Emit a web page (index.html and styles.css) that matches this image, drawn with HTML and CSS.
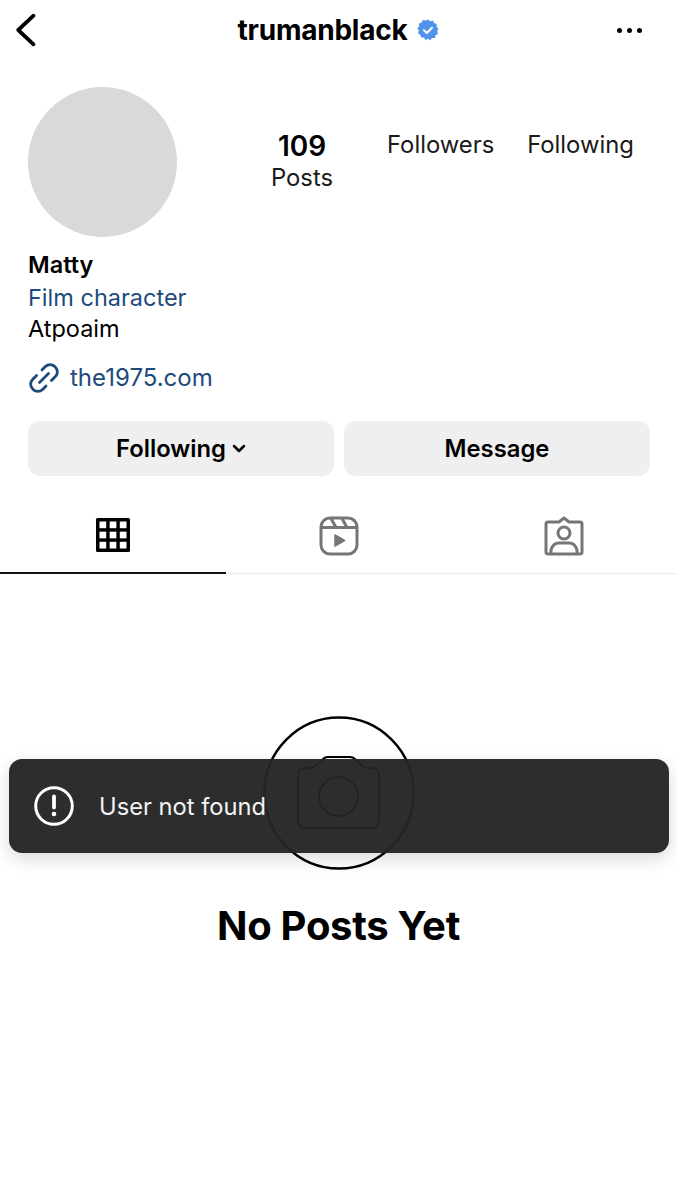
FILE: index.html
```html
<!DOCTYPE html>
<html lang="en">

<head>
    <meta charset="UTF-8">
    <meta name="viewport" content="width=device-width, initial-scale=1.0">
    <title>trumanblack</title>
    <link rel="stylesheet" href="styles.css">
</head>

<body>
    <!-- Top bar -->
    <header class="topbar">
        <svg class="back-icon" width="24" height="36" viewBox="0 0 24 36">
            <path d="M18.500 3.700 L3.200 18 L18.500 32.300" fill="none" stroke="#000" stroke-width="3.800" stroke-linecap="round" stroke-linejoin="round" />
        </svg>
        <div class="username">
            <span>trumanblack</span>
            <svg width="22" height="22" viewBox="0 0 22 22">
                <path fill="#4f94ea" d="M11 0.5l2.2 1.7 2.7-.6 1.2 2.5 2.6.9-.1 2.8 1.9 2-1.4 2.4.8 2.7-2.4 1.4-.6 2.7-2.8.1-1.8 2.1-2.3-1.5-2.5 1.2-1.6-2.3-2.8-.2-.6-2.7-2.4-1.3.7-2.7-1.5-2.4 1.9-2-.2-2.8 2.6-1 1.1-2.5 2.7.5z" />
                <path d="M7 11.3l2.8 2.7 5.2-5.2" fill="none" stroke="#fff" stroke-width="2" stroke-linecap="round" stroke-linejoin="round" />
            </svg>
        </div>
        <div class="more-icon"><i></i><i></i><i></i></div>
    </header>

    <!-- Avatar and counts -->
    <section class="profile-row">
        <div class="avatar"></div>
        <div class="stats">
            <div class="stat stat-posts">
                <strong>109</strong>
                <span>Posts</span>
            </div>
            <div class="stat"><span>Followers</span></div>
            <div class="stat"><span>Following</span></div>
        </div>
    </section>

    <!-- Bio -->
    <section class="bio">
        <div class="bio-name">Matty</div>
        <div class="bio-category">Film character</div>
        <div class="bio-text">Atpoaim</div>
        <div class="bio-link">
            <svg width="32" height="32" viewBox="0 0 32 32" fill="none" stroke="#1d4a7c" stroke-width="2.800" stroke-linecap="round">
                <path d="M14 8l3.400-3.400a6.600 6.600 0 0 1 9.400 0l.6.6a6.600 6.600 0 0 1 0 9.400l-4 4" />
                <path d="M18 24l-3.400 3.400a6.600 6.600 0 0 1-9.400 0l-.6-.6a6.600 6.600 0 0 1 0-9.400l4-4" />
                <path d="M11.500 20.500l9-9" />
            </svg>
            <span>the1975.com</span>
        </div>
    </section>

    <!-- Action buttons -->
    <section class="actions">
        <button class="action-btn" type="button">
            Following
            <svg width="14" height="9" viewBox="0 0 14 9">
                <path d="M2 2L7 7l5-5" fill="none" stroke="#000" stroke-width="2.500" stroke-linecap="round" stroke-linejoin="round" />
            </svg>
        </button>
        <button class="action-btn" type="button">Message</button>
    </section>

    <!-- Tabs -->
    <nav class="tabs">
        <div class="tab tab-active">
            <svg width="36" height="36" viewBox="0 0 36 36">
                <rect x="1" y="1" width="34" height="34" rx="1.500" fill="#000" />
                <g fill="#fff">
                    <rect x="4.500" y="4.500" width="6.700" height="6.700" />
                    <rect x="14.650" y="4.500" width="6.700" height="6.700" />
                    <rect x="24.800" y="4.500" width="6.700" height="6.700" />
                    <rect x="4.500" y="14.650" width="6.700" height="6.700" />
                    <rect x="14.650" y="14.650" width="6.700" height="6.700" />
                    <rect x="24.800" y="14.650" width="6.700" height="6.700" />
                    <rect x="4.500" y="24.800" width="6.700" height="6.700" />
                    <rect x="14.650" y="24.800" width="6.700" height="6.700" />
                    <rect x="24.800" y="24.800" width="6.700" height="6.700" />
                </g>
            </svg>
        </div>
        <div class="tab">
            <svg width="40" height="40" viewBox="0 0 40 40" fill="none" stroke="#767676" stroke-width="3">
                <rect x="2" y="2" width="36" height="36" rx="9" />
                <path d="M2.500 11.500H37.500M12 2.500l5 9M23 2.500l5 9" />
                <path d="M16 19l9.500 5.500-9.500 5.500z" fill="#767676" stroke-width="1.500" stroke-linejoin="round" />
            </svg>
        </div>
        <div class="tab">
            <svg width="40" height="40" viewBox="0 0 40 40" fill="none" stroke="#767676" stroke-width="3" stroke-linejoin="round">
                <path d="M4 6H15L20 2l5 4H36Q38 6 38 8V36Q38 38 36 38H4Q2 38 2 36V8Q2 6 4 6Z" />
                <circle cx="20" cy="17" r="6" />
                <path d="M7 37V34Q9 27 15 27H25Q31 27 33 34V37" />
            </svg>
        </div>
    </nav>

    <!-- Empty state -->
    <section class="empty">
        <svg width="152" height="154" viewBox="0 0 152 154" fill="none" stroke="#000">
            <ellipse cx="76" cy="77" rx="74.500" ry="75.500" stroke-width="2.500" />
            <path stroke-width="2" d="M43 52H47Q51 52 53 49L60 43Q62 41 65 41H87Q90 41 92 43L98 49Q100 52 104 52H108Q116 52 116 60V104Q116 112 108 112H43Q35 112 35 104V60Q35 52 43 52Z" />
            <circle stroke-width="2" cx="75.500" cy="80.500" r="19.500" />
        </svg>
        <h2>No Posts Yet</h2>
    </section>

    <!-- Toast -->
    <div class="toast">
        <svg width="40" height="40" viewBox="0 0 40 40">
            <circle cx="20" cy="20" r="18.300" fill="none" stroke="#fff" stroke-width="3" />
            <path d="M20 10.500V21.500" stroke="#fff" stroke-width="3.800" stroke-linecap="round" />
            <circle cx="20" cy="28" r="2.300" fill="#fff" />
        </svg>
        <span>User not found</span>
    </div>
</body>

</html>
```

FILE: styles.css
```css
* {
    box-sizing: border-box;
}

body {
    position: relative;
    margin: 0;
    min-height: 1200px;
    background: #fff;
    color: #000;
    font-family: Inter, "Liberation Sans", sans-serif;
}

.topbar {
    display: flex;
    align-items: center;
    justify-content: space-between;
    height: 60px;
    padding: 0 35px 0 15px;
}

.back-icon {
    display: block;
}

.username {
    display: flex;
    align-items: center;
    gap: 10px;
    margin-left: 21px;
    font-size: 28px;
    font-weight: 700;
    letter-spacing: -0.25px;
}

.more-icon {
    display: flex;
    gap: 5px;
}

.more-icon i {
    width: 5px;
    height: 5px;
    border-radius: 50%;
    background: #000;
}

.profile-row {
    display: flex;
    padding: 27px 0 0 28px;
    height: 177px;
}

.avatar {
    width: 149px;
    height: 150px;
    border-radius: 50%;
    background: #d9d9d9;
}

.stats {
    display: flex;
    align-items: flex-start;
    gap: 33px;
    margin-left: 94px;
    padding-top: 43px;
    font-size: 23.800px;
}

.stat {
    display: flex;
    flex-direction: column;
    align-items: center;
    line-height: 29px;
}

.stat-posts {
    margin-right: 21px;
}

.stat strong {
    font-size: 28px;
    font-weight: 600;
    line-height: 33px;
}

.stat span {
    color: #1a1a1a;
}

.bio {
    padding: 11px 28px 0;
    font-size: 23.500px;
}

.bio-name {
    font-weight: 600;
    line-height: 33px;
}

.bio-category {
    color: #1d4a7c;
    line-height: 33px;
}

.bio-text {
    line-height: 30px;
}

.bio-link {
    display: flex;
    align-items: center;
    gap: 10px;
    margin-top: 18px;
    color: #1d4a7c;
    font-size: 24px;
    line-height: 32px;
}

.actions {
    display: flex;
    gap: 10px;
    padding: 0 27px 0 28px;
    margin-top: 27px;
}

.action-btn {
    display: flex;
    flex: 1;
    align-items: center;
    justify-content: center;
    gap: 6px;
    height: 55px;
    border: none;
    border-radius: 12px;
    background: #efefef;
    color: #000;
    font-family: inherit;
    font-size: 23.800px;
    font-weight: 600;
}

.tabs {
    display: flex;
    margin-top: 22px;
    border-bottom: 1px solid #ececec;
}

.tab {
    display: flex;
    flex: 1;
    align-items: center;
    justify-content: center;
    height: 76px;
    margin-bottom: -1px;
    padding-bottom: 1px;
}

.tab-active {
    border-bottom: 2px solid #111;
}

.empty {
    display: flex;
    flex-direction: column;
    align-items: center;
    padding-top: 142px;
}

.empty h2 {
    margin: 30px 0 0;
    font-size: 40px;
    font-weight: 700;
    letter-spacing: -0.3px;
    line-height: 52px;
}

/* sits over the empty state, camera shows through a little */
.toast {
    position: absolute;
    top: 759px;
    left: 9px;
    display: flex;
    align-items: center;
    gap: 25px;
    width: 660px;
    height: 94px;
    padding: 0 0 0 25px;
    border-radius: 13px;
    background: rgba(36, 36, 36, 0.96);
    box-shadow: 0 6px 18px rgba(0, 0, 0, 0.15);
    color: #f2f2f2;
    font-size: 23.700px;
}
```
